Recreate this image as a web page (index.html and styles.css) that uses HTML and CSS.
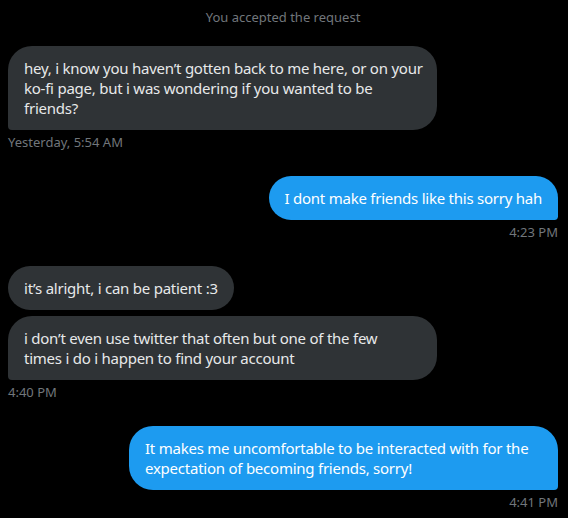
FILE: index.html
```html
<!DOCTYPE html>
<html>
<head>
<meta charset="utf-8">
<link rel="stylesheet" href="styles.css">
</head>
<body>
<div class="chat">
  <div class="notice">You accepted the request</div>

  <div class="group in">
    <div class="bubble in last wide">hey, i know you haven’t gotten back to me here, or on your<br>ko-fi page, but i was wondering if you wanted to be<br>friends?</div>
    <div class="time">Yesterday, 5:54 AM</div>
  </div>

  <div class="group out">
    <div class="bubble out last">I dont make friends like this sorry hah</div>
    <div class="time">4:23 PM</div>
  </div>

  <div class="group in">
    <div class="bubble in">it’s alright, i can be patient :3</div>
    <div class="bubble in last wide">i don’t even use twitter that often but one of the few<br>times i do i happen to find your account</div>
    <div class="time">4:40 PM</div>
  </div>

  <div class="group out">
    <div class="bubble out last wide">It makes me uncomfortable to be interacted with for the<br>expectation of becoming friends, sorry!</div>
    <div class="time">4:41 PM</div>
  </div>
</div>
</body>
</html>
```

FILE: styles.css
```css
* { box-sizing: border-box; }
html, body {
  margin: 0;
  padding: 0;
  background: #000;
}
body {
  font-family: "Noto Sans", "Open Sans", sans-serif;
}
.chat {
  display: flex;
  flex-direction: column;
  padding: 9px 10px 0 8px;
}
.notice {
  text-align: center;
  font-size: 13px;
  line-height: 16px;
  color: #71767b;
  margin-bottom: 21px;
}
.group {
  display: flex;
  flex-direction: column;
  gap: 6px;
  margin-bottom: 26px;
}
.group.in { align-items: flex-start; }
.group.out { align-items: flex-end; }
.bubble {
  font-size: 15px;
  line-height: 20px;
  letter-spacing: -0.24px;
  padding: 12px 16px;
  border-radius: 24px;
  white-space: nowrap;
}
.bubble.wide { width: 429px; }
.bubble.in {
  background: #2f3336;
  color: #e7e9ea;
}
.bubble.out {
  background: #1d9bf0;
  color: #fff;
}
.bubble.in.last { border-bottom-left-radius: 4px; }
.bubble.out.last { border-bottom-right-radius: 4px; }
.time {
  font-size: 13px;
  line-height: 16px;
  color: #71767b;
  margin-top: -2px;
}
```
